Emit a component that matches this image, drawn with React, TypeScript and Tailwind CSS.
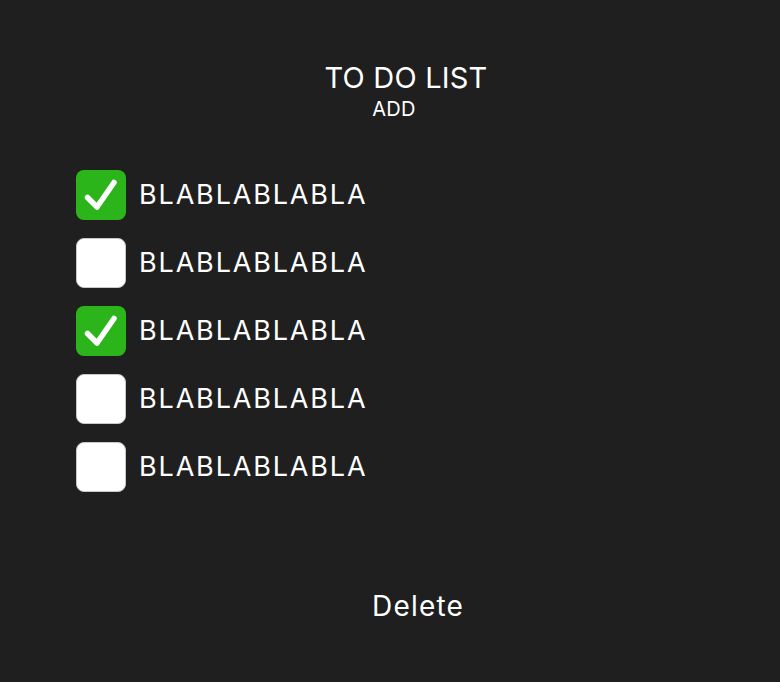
import { useState } from 'react';

const items = [
	{ id: 1, text: 'BLABLABLABLA', done: true },
	{ id: 2, text: 'BLABLABLABLA', done: false },
	{ id: 3, text: 'BLABLABLABLA', done: true },
	{ id: 4, text: 'BLABLABLABLA', done: false },
	{ id: 5, text: 'BLABLABLABLA', done: false },
];

const App = () => {
	const [todos, setTodos] = useState(items);

	const toggle = (id: number) => {
		setTodos(todos.map((t) => (t.id === id ? { ...t, done: !t.done } : t)));
	};

	return (
		<div className="w-[780px] h-[682px] bg-[#1f1f1f] text-white font-['Inter',sans-serif] flex flex-col">
			<div className="pt-[60px] flex flex-col items-center">
				<h1 className="text-[29px] leading-[36px] tracking-[0.2px] ml-[32px]">TO DO LIST</h1>
				<button type="button" className="mt-[3px] text-[20px] leading-[20px] tracking-[0.3px] ml-[8px]">ADD</button>
			</div>
			<ul className="mt-[51px] pl-[76px] flex flex-col gap-[18px]">
				{todos.map((todo) => (
					<li key={todo.id} className="flex items-center h-[50px]">
						<button
							type="button"
							onClick={() => toggle(todo.id)}
							className={
								todo.done
									? 'w-[50px] h-[50px] rounded-[8px] bg-[#2bb51b]'
									: 'w-[50px] h-[50px] rounded-[8px] bg-white border border-[#c8c8c8]'
							}
						>
							{todo.done && (
								<svg width="50" height="50" viewBox="0 0 50 50" fill="none">
									<path d="M11.5 27.5 L21 37 L38 12.5" stroke="white" strokeWidth="5.5" strokeLinecap="round" strokeLinejoin="round" />
								</svg>
							)}
						</button>
						<span className="ml-[13px] text-[27px] tracking-[1.85px]">{todo.text}</span>
					</li>
				))}
			</ul>
			<div className="mt-[93px] flex justify-center">
				<button type="button" className="text-[28px] tracking-[1.2px] ml-[56px]">Delete</button>
			</div>
		</div>
	);
};

export default App;
